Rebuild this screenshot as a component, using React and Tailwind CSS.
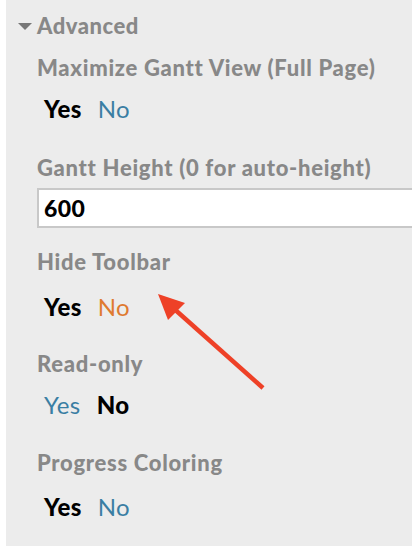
import React from 'react';

const font = { fontFamily: 'Lato, "Open Sans", sans-serif' };

const YesNo = ({ selected, noColor = 'text-[#3a7ea3]' }) => (
  <div className="flex items-center h-[28px] pl-[7px] gap-[16px] text-[24px] tracking-[0.4px] leading-none">
    <span className={selected === 'yes' ? 'font-black text-black' : 'text-[#3a7ea3]'}>Yes</span>
    <span className={selected === 'no' ? 'font-black text-black' : noColor}>No</span>
  </div>
);

const Label = ({ children, className = '' }) => (
  <div className={`flex items-center h-[28px] text-[22px] font-black tracking-[0.7px] text-[#888888] leading-none ${className}`}>
    {children}
  </div>
);

export default function App() {
  return (
    <div className="w-[412px] h-[546px] bg-white flex overflow-hidden" style={font}>
      <div className="relative flex-1 ml-[6px] bg-[#ececec] flex flex-col">
        {/* Section header */}
        <div className="flex items-center h-[28px] mt-[12px] pl-[12px] gap-[5px] text-[22px] font-black tracking-[0.5px] text-[#888888] leading-none">
          <svg width="14" height="7" viewBox="0 0 14 7">
            <polygon points="0,0 14,0 7,7" fill="#777777" />
          </svg>
          <span>Advanced</span>
        </div>

        <div className="flex flex-col pl-[31px]">
          <Label className="mt-[14px]">Maximize Gantt View (Full Page)</Label>
          <div className="mt-[13px]">
            <YesNo selected="yes" />
          </div>

          <Label className="mt-[31px]">Gantt Height (0 for auto-height)</Label>
          <div className="mt-[6px] h-[40px] -mr-[10px] bg-white border-2 border-[#c8c8c8] flex items-center pl-[5px] text-[23px] font-black tracking-[0.4px] text-black">
            600
          </div>

          <Label className="mt-[20px]">Hide Toolbar</Label>
          <div className="mt-[17px]">
            <YesNo selected="yes" noColor="text-[#df7a30]" />
          </div>

          <Label className="mt-[29px]">Read-only</Label>
          <div className="mt-[13px]">
            <YesNo selected="no" />
          </div>

          <Label className="mt-[30px]">Progress Coloring</Label>
          <div className="mt-[16px]">
            <YesNo selected="yes" />
          </div>
        </div>

        {/* Annotation arrow */}
        <svg className="absolute left-[-6px] top-0 pointer-events-none" width="412" height="546" viewBox="0 0 412 546">
          <line x1="263" y1="388" x2="172" y2="307" stroke="#ee4127" strokeWidth="4.5" />
          <polygon points="158,294 185,303 168,320" fill="#ee4127" />
        </svg>
      </div>
    </div>
  );
}
